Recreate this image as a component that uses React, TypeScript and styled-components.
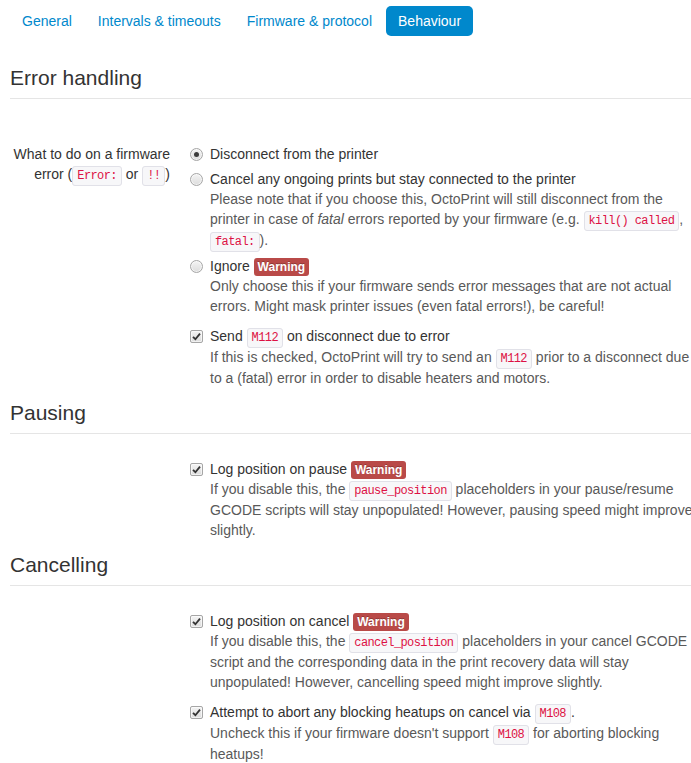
import styled, { createGlobalStyle } from 'styled-components';
import type { ReactNode } from 'react';

const GlobalStyle = createGlobalStyle`
  html, body {
    margin: 0;
    padding: 0;
    overflow: hidden;
    background: #fff;
  }
  body {
    font-family: "Liberation Sans", Arial, sans-serif;
    font-size: 14px;
    line-height: 20px;
    color: #333;
  }
`;

const Page = styled.div`
  width: 690px;
  padding: 6px 0 0 10px;
`;

const Pills = styled.ul`
  display: flex;
  list-style: none;
  margin: 0 0 22px;
  padding: 0;
`;

const Pill = styled.li<{ $active?: boolean }>`
  margin-right: 2px;
  padding: 8px 12px;
  line-height: 14px;
  border-radius: 5px;
  color: ${(p) => (p.$active ? '#fff' : '#0088cc')};
  background: ${(p) => (p.$active ? '#0088cc' : 'transparent')};
`;

const Legend = styled.h3<{ $extra?: boolean }>`
  margin: 0 0 ${(p) => (p.$extra ? '40px' : '20px')};
  font-size: 21px;
  font-weight: normal;
  line-height: 40px;
  color: #333;
  border-bottom: 1px solid #e5e5e5;
`;

const Group = styled.div`
  display: grid;
  grid-template-columns: 160px 1fr;
  column-gap: 20px;
`;

const ControlLabel = styled.div`
  padding-top: 5px;
  text-align: right;
`;

const Controls = styled.div`
  grid-column: 2;
`;

const Option = styled.div<{ $pad?: boolean }>`
  display: grid;
  grid-template-columns: 20px 1fr;
  padding-top: ${(p) => (p.$pad ? '5px' : '0')};
  margin-bottom: 5px;
`;

const Help = styled.span`
  display: block;
  color: #595959;
`;

// line-height chosen so a line holding code grows by 1px, like the original
const Code = styled.code`
  padding: 2px 4px;
  font-family: "Liberation Mono", Consolas, monospace;
  font-size: 12px;
  letter-spacing: -0.6px;
  line-height: 18px;
  color: #dd1144;
  background: #f7f7f9;
  border: 1px solid #e1e1e8;
  border-radius: 3px;
  white-space: nowrap;
`;

const Badge = styled.span`
  padding: 2px 4px;
  font-size: 12px;
  font-weight: bold;
  line-height: 14px;
  color: #fff;
  background: #b94a48;
  border-radius: 3px;
  text-shadow: 0 -1px 0 rgba(0, 0, 0, 0.25);
`;

const Box = styled.span<{ $round?: boolean }>`
  display: flex;
  align-items: center;
  justify-content: center;
  width: 11px;
  height: 11px;
  margin-top: 4px;
  border: 1px solid #a6a6a6;
  border-radius: ${(p) => (p.$round ? '50%' : '2px')};
  background: linear-gradient(#f4f4f4, #dcdcdc);
  box-shadow: inset 0 0 0 1px rgba(255, 255, 255, 0.6);
`;

const Dot = styled.span`
  width: 5px;
  height: 5px;
  border-radius: 50%;
  background: #3c3c3c;
`;

const Tick = () => (
  <svg width="9" height="9" viewBox="0 0 9 9" aria-hidden="true">
    <path d="M1 4.8 L3.4 7.2 L8 1.6" fill="none" stroke="#333" strokeWidth="1.8" />
  </svg>
);

interface OptProps {
  kind: 'radio' | 'check';
  on?: boolean;
  pad?: boolean;
  children: ReactNode;
}

const Opt = ({ kind, on, pad, children }: OptProps) => (
  <Option $pad={pad}>
    <Box $round={kind === 'radio'}>
      {kind === 'radio' ? on && <Dot /> : on && <Tick />}
    </Box>
    <div>{children}</div>
  </Option>
);

export default function App() {
  return (
    <Page>
      <GlobalStyle />
      <Pills>
        <Pill>General</Pill>
        <Pill>Intervals &amp; timeouts</Pill>
        <Pill>Firmware &amp; protocol</Pill>
        <Pill $active>Behaviour</Pill>
      </Pills>

      <Legend $extra>Error handling</Legend>
      <Group>
        <ControlLabel>
          What to do on a firmware error (<Code>Error:</Code> or <Code>!!</Code>)
        </ControlLabel>
        <Controls>
          <Opt kind="radio" on pad>
            Disconnect from the printer
          </Opt>
          <Opt kind="radio">
            Cancel any ongoing prints but stay connected to the printer
            <Help>
              Please note that if you choose this, OctoPrint will still disconnect from the
              printer in case of <i>fatal</i> errors reported by your firmware (e.g.{' '}
              <Code>kill() called</Code>, <Code>fatal:</Code>).
            </Help>
          </Opt>
          <Opt kind="radio">
            Ignore <Badge>Warning</Badge>
            <Help>
              Only choose this if your firmware sends error messages that are not actual
              errors. Might mask printer issues (even fatal errors!), be careful!
            </Help>
          </Opt>
          <Opt kind="check" on pad>
            Send <Code>M112</Code> on disconnect due to error
            <Help>
              If this is checked, OctoPrint will try to send an <Code>M112</Code> prior to a
              disconnect due to a (fatal) error in order to disable heaters and motors.
            </Help>
          </Opt>
        </Controls>
      </Group>

      <Legend>Pausing</Legend>
      <Group>
        <Controls>
          <Opt kind="check" on pad>
            Log position on pause <Badge>Warning</Badge>
            <Help>
              If you disable this, the <Code>pause_position</Code> placeholders in your
              pause/resume GCODE scripts will stay unpopulated! However, pausing speed might
              improve slightly.
            </Help>
          </Opt>
        </Controls>
      </Group>

      <Legend>Cancelling</Legend>
      <Group>
        <Controls>
          <Opt kind="check" on pad>
            Log position on cancel <Badge>Warning</Badge>
            <Help>
              If you disable this, the <Code>cancel_position</Code> placeholders in your cancel
              GCODE script and the corresponding data in the print recovery data will stay
              unpopulated! However, cancelling speed might improve slightly.
            </Help>
          </Opt>
          <Opt kind="check" on pad>
            Attempt to abort any blocking heatups on cancel via <Code>M108</Code>.
            <Help>
              Uncheck this if your firmware doesn't support <Code>M108</Code> for aborting
              blocking heatups!
            </Help>
          </Opt>
        </Controls>
      </Group>
    </Page>
  );
}
